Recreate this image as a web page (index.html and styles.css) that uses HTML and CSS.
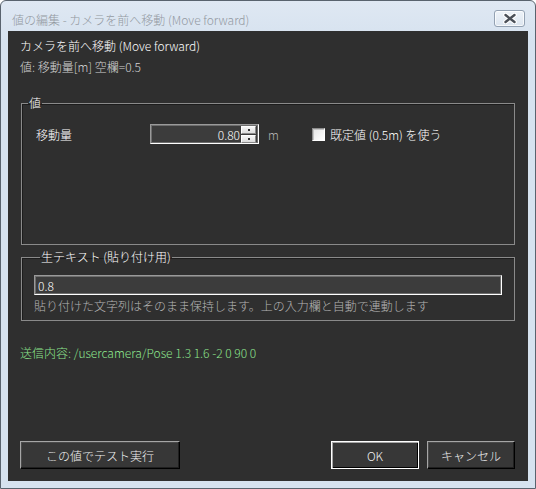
FILE: index.html
```html
<!DOCTYPE html>
<html lang="ja">
<head>
  <meta charset="UTF-8">
  <title>値の編集</title>
  <link rel="stylesheet" href="styles.css">
</head>
<body>
  <div class="window">
    <div class="titlebar">
      <span class="title">値の編集 - カメラを前へ移動 (Move forward)</span>
      <button class="close-btn" type="button" aria-label="閉じる">
        <svg width="16" height="11" viewBox="0 0 16 11">
          <path d="M3.5 2 L12.5 9 M12.5 2 L3.5 9" stroke="#ffffff" stroke-width="4.6" stroke-linecap="round"/>
          <path d="M3.5 2 L12.5 9 M12.5 2 L3.5 9" stroke="#4b5058" stroke-width="2.4" stroke-linecap="round"/>
        </svg>
      </button>
    </div>

    <div class="client">
      <div class="heading">カメラを前へ移動 (Move forward)</div>
      <div class="hint">値: 移動量[m] 空欄=0.5</div>

      <fieldset class="group group-value">
        <legend>値</legend>
        <div class="value-row">
          <label class="field-label">移動量</label>
          <div class="spin">
            <input class="spin-input" type="text" value="0.80">
            <div class="spin-buttons">
              <span class="spin-btn"></span>
              <span class="spin-btn"></span>
            </div>
          </div>
          <span class="unit">m</span>
          <label class="check">
            <span class="check-box"></span>
            既定値 (0.5m) を使う
          </label>
        </div>
      </fieldset>

      <fieldset class="group group-raw">
        <legend>生テキスト (貼り付け用)</legend>
        <input class="raw-input" type="text" value="0.8">
        <div class="raw-note">貼り付けた文字列はそのまま保持します。上の入力欄と自動で連動します</div>
      </fieldset>

      <div class="send-line">送信内容: /usercamera/Pose 1.3 1.6 -2 0 90 0</div>

      <div class="actions">
        <button class="btn btn-test" type="button">この値でテスト実行</button>
        <div class="actions-right">
          <button class="btn btn-default" type="button">OK</button>
          <button class="btn" type="button">キャンセル</button>
        </div>
      </div>
    </div>
  </div>
</body>
</html>
```

FILE: styles.css
```css
body {
  margin: 0;
  font-family: "Noto Sans CJK JP", "Noto Sans", sans-serif;
  font-size: 12px;
  font-weight: 300;
  background: #ffffff;
}

.window {
  width: 536px;
  height: 489px;
  box-sizing: border-box;
  border: 1px solid #59636e;
  border-radius: 6px 6px 0 0;
  background: linear-gradient(#dfe8f3, #d6e2ef 40px);
  padding: 0 7px 7px;
  display: flex;
  flex-direction: column;
}

/* title bar */
.titlebar {
  height: 30px;
  display: flex;
  align-items: flex-start;
  justify-content: space-between;
}

.title {
  margin: 11px 0 0 4px;
  line-height: 16px;
  color: #9399a1;
}

.close-btn {
  width: 31px;
  height: 17px;
  margin: 9px 3px 0 0;
  padding: 0;
  border: 1px solid #93a1b2;
  border-radius: 3px;
  background: linear-gradient(#eef3f9, #dce5ef);
  box-shadow: inset 0 0 0 1px rgba(255, 255, 255, 0.7);
  display: flex;
  align-items: center;
  justify-content: center;
}

/* client area */
.client {
  flex: 1;
  background: #2f2f2f;
  color: #ffffff;
  padding: 7px 13px 12px 12px;
  display: flex;
  flex-direction: column;
}

.heading {
  line-height: 16px;
}

.hint {
  margin-top: 5px;
  line-height: 16px;
  color: #d2d2d2;
}

.group {
  margin: 0 0 0 1px;
  padding: 0;
  border: 1px solid #8a8a8a;
  box-shadow: inset 1px 1px 0 #1c1c1c;
  box-sizing: border-box;
  min-width: 0;
}

.group legend {
  margin-left: 6px;
  padding: 0 1px;
  line-height: 16px;
  color: #ffffff;
}

.group-value {
  margin-top: 20px;
  height: 150px;
}

.value-row {
  margin-top: 13px;
  height: 20px;
  display: flex;
  align-items: center;
  padding-left: 14px;
}

.field-label {
  width: 114px;
}

/* numeric spin box */
.spin {
  width: 109px;
  height: 20px;
  box-sizing: border-box;
  border: 1px solid;
  border-color: #9a9a9a #ffffff #ffffff #9a9a9a;
  background: #3c3c3c;
  box-shadow: inset 0 0 0 1px #6e6e6e;
  display: flex;
  align-items: center;
}

.spin-input {
  flex: 1;
  min-width: 0;
  border: none;
  background: transparent;
  color: #ffffff;
  font: inherit;
  text-align: right;
  padding: 0 1px 0 0;
  outline: none;
}

.spin-buttons {
  width: 15px;
  margin-right: 2px;
  display: flex;
  flex-direction: column;
  gap: 1px;
}

.spin-btn {
  height: 6px;
  background: linear-gradient(#f6f6f6, #dcdcdc);
  border: 1px solid;
  border-color: #ffffff #8a8a8a #8a8a8a #ffffff;
  position: relative;
}

.spin-btn::after {
  content: "";
  position: absolute;
  left: 6px;
  top: 2px;
  width: 2px;
  height: 2px;
  background: #333333;
}

.unit {
  width: 44px;
  margin-left: 9px;
  color: #b4b4b4;
}

.check {
  display: flex;
  align-items: center;
  gap: 5px;
}

.check-box {
  width: 13px;
  height: 13px;
  box-sizing: border-box;
  border: 1px solid;
  border-color: #8c8c8c #ffffff #ffffff #8c8c8c;
  background: linear-gradient(135deg, #e4e4e4, #ffffff);
  box-shadow: inset 1px 1px 0 #c4c4c4;
}

/* raw text group */
.group-raw {
  margin-top: 4px;
  height: 72px;
  padding: 0 12px;
}

.raw-input {
  display: block;
  width: 100%;
  height: 20px;
  margin-top: 10px;
  box-sizing: border-box;
  border: 1px solid;
  border-color: #9a9a9a #ffffff #ffffff #9a9a9a;
  background: #3c3c3c;
  box-shadow: inset 0 0 0 1px #6e6e6e;
  color: #ffffff;
  font: inherit;
  padding: 0 3px;
  outline: none;
}

.raw-note {
  margin-top: 3px;
  line-height: 16px;
  color: #b4b4b4;
}

.send-line {
  margin-top: 24px;
  line-height: 16px;
  color: #8ee68e;
}

/* bottom buttons */
.actions {
  margin-top: auto;
  display: flex;
  justify-content: space-between;
}

.actions-right {
  display: flex;
  gap: 8px;
}

.btn {
  width: 88px;
  height: 28px;
  padding: 0;
  font: inherit;
  color: #f0f0f0;
  background: #373737;
  border: 1px solid;
  border-color: #a6a6a6 #000000 #000000 #a6a6a6;
  box-shadow: inset -1px -1px 0 #1f1f1f, inset 1px 1px 0 #4a4a4a;
}

.btn-test {
  width: 160px;
}

.btn-default {
  border-color: #ffffff;
  box-shadow: inset 1px 1px 0 #a6a6a6, inset -1px -1px 0 #000000;
}
```
